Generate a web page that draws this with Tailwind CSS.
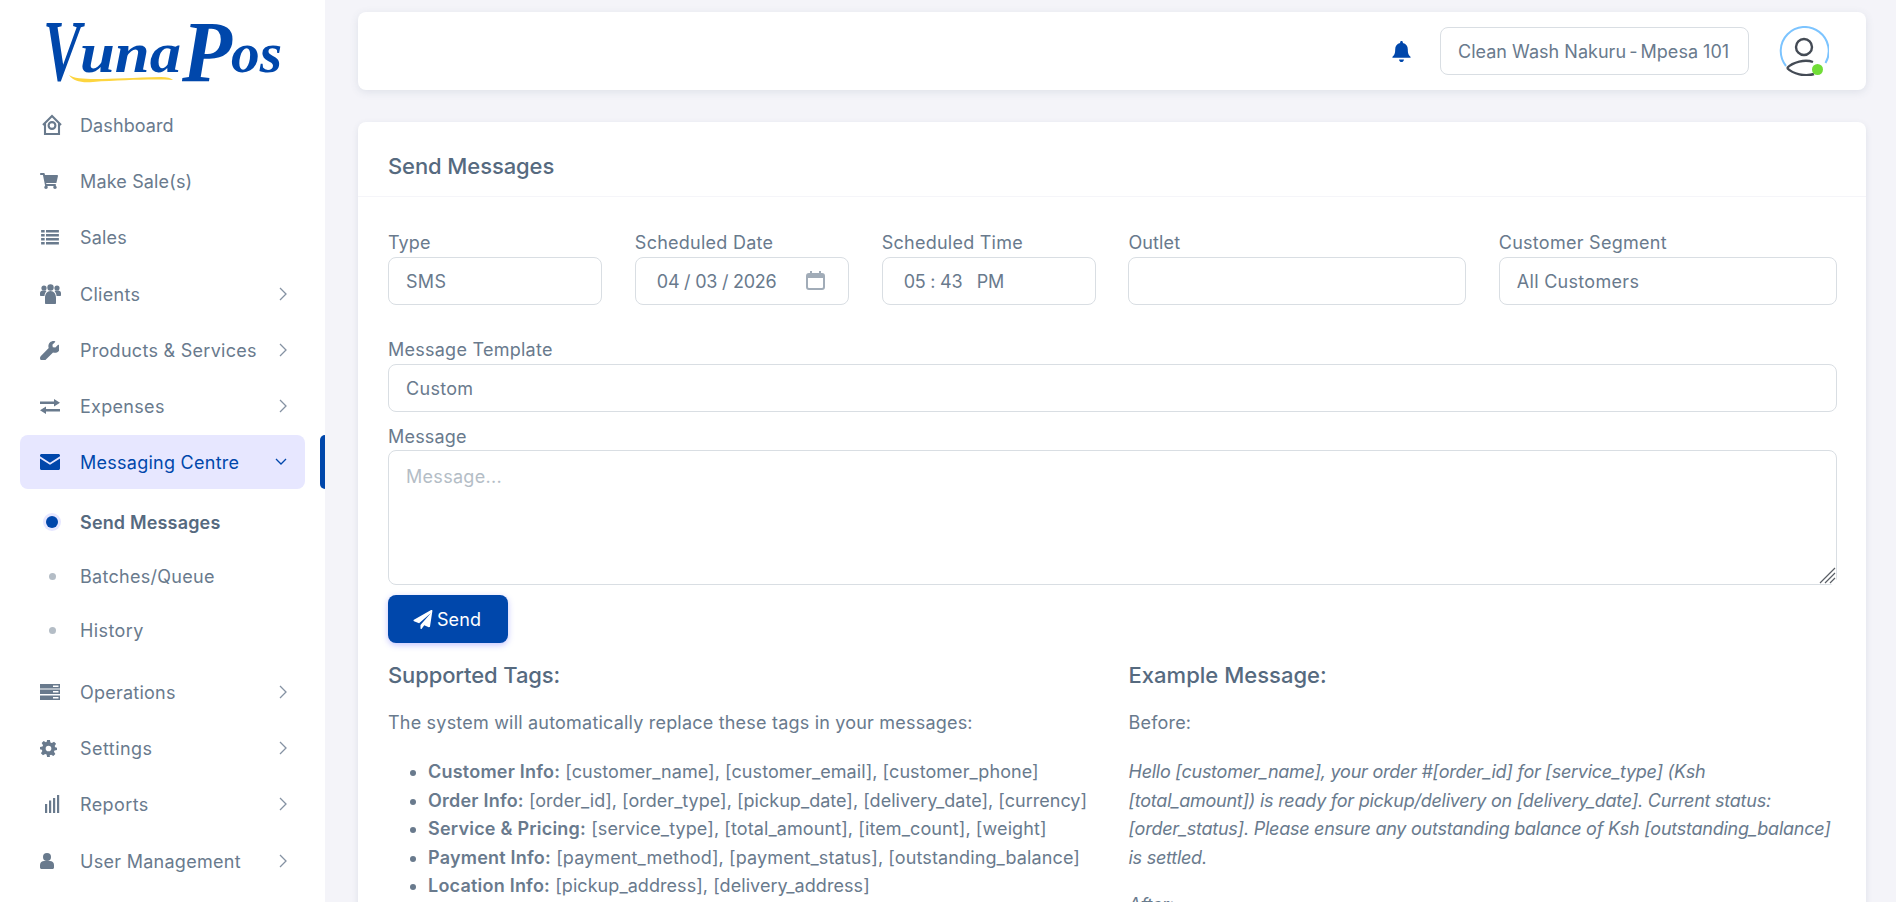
<!DOCTYPE html>
<html lang="en">
<head>
<meta charset="utf-8">
<title>Send Messages</title>
<script src="https://cdn.jsdelivr.net/npm/@tailwindcss/browser@4"></script>
</head>
<body class="m-0 h-screen overflow-hidden bg-[#f4f4f9] font-['Inter','Liberation_Sans',sans-serif] text-[18px] text-[#697a8d]">
<div class="flex h-[902px] overflow-hidden">
  <!-- Sidebar -->
  <aside class="w-[325px] shrink-0 bg-white h-full overflow-hidden relative">
    <div class="h-[97px] pl-[43px]">
      <svg class="block" width="260" height="97" viewBox="0 0 260 97" aria-label="VunaPos logo">
        <text font-family="Liberation Serif" font-style="italic" font-weight="700" fill="#0047ab"><tspan x="0" y="80" font-size="86" textLength="38" lengthAdjust="spacingAndGlyphs">V</tspan><tspan x="37" y="72" font-size="58" textLength="101" lengthAdjust="spacingAndGlyphs">una</tspan><tspan x="139" y="81" font-size="86" textLength="50" lengthAdjust="spacingAndGlyphs">P</tspan><tspan x="188" y="72" font-size="58" textLength="51" lengthAdjust="spacingAndGlyphs">os</tspan></text>
        <path d="M26 75 C36 82 70 78 118 77 C124 77 128 78 130 80 C110 79 80 80 50 82 C38 83 30 81 26 75Z" fill="#fdd53f"/>
      </svg>
    </div>
    <nav class="flex flex-col">
      <a class="h-[56px] flex items-center pl-[40px] pr-[38px] shrink-0">
        <svg class="w-[24px] h-[24px] mr-[16px] text-[#697a8d]" viewBox="0 0 24 24" fill="none" stroke="currentColor" stroke-width="2.1"><path d="M3 12 L12 3 L21 12 M5 10 V21 H19 V10"/><circle cx="12" cy="12.5" r="3.4"/></svg>
        <span class="tracking-[0.1px]">Dashboard</span>
      </a>
      <a class="h-[56px] flex items-center pl-[40px] pr-[38px] shrink-0">
        <svg class="w-[18px] h-[16px] mr-[22px]" viewBox="0 0 576 512" fill="currentColor"><path d="M528 301 L575 93c3-15-8-29-23-29H159L150 19C148 8 138 0 126 0H24C11 0 0 11 0 24v16c0 13 11 24 24 24h70l70 344c-17 10-28 28-28 48 0 31 25 56 56 56s56-25 56-56c0-16-6-30-17-40h210c-11 10-17 24-17 40 0 31 25 56 56 56s56-25 56-56c0-22-13-41-32-50l6-24c3-15-8-29-23-29H204l-7-32h308c11 0 21-8 23-19z"/></svg>
        <span class="tracking-[0.15px]">Make Sale(s)</span>
      </a>
      <a class="h-[56px] flex items-center pl-[40px] pr-[38px] shrink-0">
        <svg class="w-[20px] h-[16px] mr-[20px]" viewBox="0 0 20 18" fill="currentColor"><path d="M0 1h4v3H0zM5.500 1H20v3H5.500zM0 5.500h4v3H0zM5.500 5.500H20v3H5.500zM0 10h4v3H0zM5.500 10H20v3H5.500zM0 14.500h4v3H0zM5.500 14.500H20v3H5.500z"/></svg>
        <span class="tracking-[0.2px]">Sales</span>
      </a>
      <a class="h-[56px] mt-px flex items-center pl-[40px] pr-[38px] shrink-0">
        <svg class="w-[21px] h-[20px] mr-[19px]" viewBox="0 0 21 20" fill="currentColor"><circle cx="4" cy="4" r="2.600"/><circle cx="17" cy="4" r="2.600"/><circle cx="10.500" cy="3.500" r="3.200"/><path d="M0 9c0-2 2-2.500 4-2.500s2.500.5 2.500.5c-1 1-2 3-2 5H1c-.6 0-1-.4-1-1zM21 9c0-2-2-2.500-4-2.500s-2.500.5-2.500.5c1 1 2 3 2 5H20c.6 0 1-.4 1-1zM5 14c0-4 2-7 5.500-7S16 10 16 14v5c0 .6-.4 1-1 1H6c-.6 0-1-.4-1-1z"/></svg>
        <span class="tracking-[0.3px]">Clients</span>
        <svg class="ml-auto w-[8px] h-[14px]" viewBox="0 0 8 14" fill="none" stroke="#8592a3" stroke-width="1.300"><path d="M1 1l6 6-6 6"/></svg>
      </a>
      <a class="h-[56px] flex items-center pl-[40px] pr-[38px] shrink-0">
        <svg class="w-[19px] h-[19px] mr-[21px]" viewBox="0 0 512 512" fill="currentColor"><path d="M507 109c-2-9-13-12-20-5l-74 74-68-11-11-68 74-74c7-7 4-18-6-20-47-12-99 0-136 37-40 40-50 99-31 149L24 402c-32 32-32 84 0 116s84 32 116 0l211-211c50 20 109 10 150-31 37-37 49-90 36-167z"/></svg>
        <span class="tracking-[0.28px]">Products &amp; Services</span>
        <svg class="ml-auto w-[8px] h-[14px]" viewBox="0 0 8 14" fill="none" stroke="#8592a3" stroke-width="1.300"><path d="M1 1l6 6-6 6"/></svg>
      </a>
      <a class="h-[56px] flex items-center pl-[40px] pr-[38px] shrink-0">
        <svg class="w-[20px] h-[15px] mr-[20px]" viewBox="0 0 20 15" fill="currentColor"><path d="M0 2.600h14V0l6 3.800-6 3.700V5H0zM20 10H6V7.500L0 11.200 6 15v-2.500h14z"/></svg>
        <span class="tracking-[0.3px]">Expenses</span>
        <svg class="ml-auto w-[8px] h-[14px]" viewBox="0 0 8 14" fill="none" stroke="#8592a3" stroke-width="1.300"><path d="M1 1l6 6-6 6"/></svg>
      </a>
      <!-- Active -->
      <div class="relative h-[54px] mt-px mb-px shrink-0">
        <a class="absolute left-[20px] right-[20px] inset-y-0 rounded-[8px] bg-[#e7e7ff] text-[#0047ab] flex items-center pl-[20px] pr-[18px]">
          <svg class="w-[20px] h-[16px] mr-[20px]" viewBox="0 0 20 16" fill="currentColor"><path d="M1.500 0h17C19.300 0 20 .7 20 1.500v.8l-10 6.400L0 2.300v-.8C0 .7.700 0 1.500 0zM0 4.500l10 6.300 10-6.300v10c0 .8-.7 1.500-1.500 1.500h-17C.7 16 0 15.300 0 14.500z"/></svg>
          <span class="tracking-[0.26px]">Messaging Centre</span>
          <svg class="ml-auto w-[12px] h-[8px]" viewBox="0 0 12 8" fill="none" stroke="#0047ab" stroke-width="1.300"><path d="M1 1l5 5 5-5"/></svg>
        </a>
        <span class="absolute right-0 inset-y-0 w-[5px] rounded-l-[5px] bg-[#0047ab]"></span>
      </div>
      <div class="flex flex-col pt-[5px]">
        <a class="h-[54px] flex items-center pl-[80px] relative font-semibold text-[#566a7f] shrink-0">
          <span class="absolute left-[46px] w-[12px] h-[12px] rounded-full bg-[#0047ab] ring-[3px] ring-[#e7e7ff]"></span>
          <span class="tracking-[0.17px]">Send Messages</span>
        </a>
        <a class="h-[54px] flex items-center pl-[80px] relative shrink-0">
          <span class="absolute left-[49px] w-[7px] h-[7px] rounded-full bg-[#b4bdc6]"></span>
          <span class="tracking-[0.28px]">Batches/Queue</span>
        </a>
        <a class="h-[54px] flex items-center pl-[80px] relative shrink-0">
          <span class="absolute left-[49px] w-[7px] h-[7px] rounded-full bg-[#b4bdc6]"></span>
          <span class="tracking-[0.4px]">History</span>
        </a>
      </div>
      <a class="h-[56px] mt-[7px] flex items-center pl-[40px] pr-[38px] shrink-0">
        <svg class="w-[20px] h-[16px] mr-[20px]" viewBox="0 0 20 16" fill="currentColor"><path fill-rule="evenodd" d="M0 0h20v4.500H0zM13 1.500v1.500h5.500V1.500zM0 5.500h20V10H0zM13 7v1.500h5.500V7zM0 11.500h20V16H0zM13 13v1.500h5.500V13z"/></svg>
        <span class="tracking-[0.24px]">Operations</span>
        <svg class="ml-auto w-[8px] h-[14px]" viewBox="0 0 8 14" fill="none" stroke="#8592a3" stroke-width="1.300"><path d="M1 1l6 6-6 6"/></svg>
      </a>
      <a class="h-[56px] flex items-center pl-[40px] pr-[38px] shrink-0">
        <svg class="w-[17px] h-[17px] mr-[23px]" viewBox="0 0 24 24" fill="currentColor"><path fill-rule="evenodd" d="M10 0h4l.7 3.400 2 .9L19.800 2.300l2.900 2.900-2 3.100.8 2L24 11v3l-3.500.7-.8 2 2 3.100-2.900 2.900-3.100-2-2 .8L14 24h-4l-.7-3.500-2-.8-3.100 2-2.900-2.900 2-3.100-.8-2L0 13V10l3.500-.7.8-2-2-3.100L5.200 1.300l3.100 2 1-.4zM12 8a4 4 0 1 0 0 8 4 4 0 0 0 0-8z"/></svg>
        <span class="tracking-[0.45px]">Settings</span>
        <svg class="ml-auto w-[8px] h-[14px]" viewBox="0 0 8 14" fill="none" stroke="#8592a3" stroke-width="1.300"><path d="M1 1l6 6-6 6"/></svg>
      </a>
      <a class="h-[56px] flex items-center pl-[40px] pr-[38px] shrink-0">
        <svg class="w-[20px] h-[18px] mr-[20px]" viewBox="0 0 20 18" fill="currentColor"><path d="M5 9h2.200v9H5zM9 5.500h2.200V18H9zM13 3h2.200v15H13zM17 0h2.200v18H17z"/></svg>
        <span class="tracking-[0.4px]">Reports</span>
        <svg class="ml-auto w-[8px] h-[14px]" viewBox="0 0 8 14" fill="none" stroke="#8592a3" stroke-width="1.300"><path d="M1 1l6 6-6 6"/></svg>
      </a>
      <a class="h-[56px] mt-px flex items-center pl-[40px] pr-[38px] shrink-0">
        <svg class="w-[14px] h-[16px] mr-[26px]" viewBox="0 0 14 16" fill="currentColor"><circle cx="7" cy="4" r="4"/><path d="M0 12c0-2.500 2-4 4-4h6c2 0 4 1.500 4 4v2.500c0 .8-.7 1.500-1.500 1.500h-11C.7 16 0 15.300 0 14.500z"/></svg>
        <span class="tracking-[0.28px]">User Management</span>
        <svg class="ml-auto w-[8px] h-[14px]" viewBox="0 0 8 14" fill="none" stroke="#8592a3" stroke-width="1.300"><path d="M1 1l6 6-6 6"/></svg>
      </a>
    </nav>
  </aside>

  <!-- Main -->
  <main class="flex-1 min-w-0 pl-[33px] pr-[30px] pt-[12px]">
    <header class="h-[78px] bg-white rounded-[8px] shadow-[0_2px_8px_rgba(67,89,113,0.12)] flex items-center justify-end pr-[37px]">
      <svg class="w-[21px] h-[21px] mr-[28px]" viewBox="0 0 20 20" fill="#0047ab"><path d="M10 0c.8 0 1.300.6 1.300 1.300v.6c3 .6 4.700 3 4.700 6 0 4 .8 5.400 2.500 7.100.4.400.2 1-.4 1H1.900c-.6 0-.8-.6-.4-1C3.200 13.300 4 11.900 4 7.900c0-3 1.700-5.400 4.700-6v-.6C8.700.6 9.200 0 10 0zM7.700 17.500h4.600c0 1.300-1 2.500-2.300 2.500s-2.300-1.200-2.300-2.500z"/></svg>
      <div class="w-[309px] h-[48px] rounded-[8px] border border-[#d9dee3] flex items-center pl-[17px] whitespace-pre tracking-[0.02px]">Clean Wash Nakuru<span class="-mx-[2px]"> - </span>Mpesa 101</div>
      <div class="relative w-[50px] h-[50px] ml-[30px]">
        <svg class="w-[50px] h-[50px]" viewBox="0 0 50 50" fill="none">
          <path d="M7 40 A24 24 0 1 1 46.500 37" stroke="#7cc4ff" stroke-width="2"/>
          <circle cx="25" cy="21" r="8" stroke="#444b55" stroke-width="2.400"/>
          <path d="M8 42 C14 36 26 33 34 36 M8 42 C14 48 26 51 35 48" stroke="#444b55" stroke-width="2.400"/>
        </svg>
        <span class="absolute left-[33px] top-[38px] w-[11px] h-[11px] rounded-full bg-[#71dd37]"></span>
      </div>
    </header>

    <section class="mt-[32px] bg-white rounded-[8px] shadow-[0_2px_6px_rgba(67,89,113,0.12)] h-[800px]">
      <div class="h-[75px] flex items-center pl-[30px] pr-[29px] pt-[14px] border-b border-[#f5f5f9]">
        <h1 class="text-[22px] font-medium text-[#566a7f] tracking-[-0.1px]">Send Messages</h1>
      </div>
      <div class="pl-[30px] pr-[29px] pt-[33px]">
        <div class="grid grid-cols-12 gap-x-[32px]">
          <div class="col-span-2 pr-px">
            <div class="h-[27px] leading-[25px] tracking-[0.1px]">Type</div>
            <div class="h-[48px] rounded-[8px] border border-[#d9dee3] flex items-center pl-[17px] pt-[1px] tracking-[0.3px]">SMS</div>
          </div>
          <div class="col-span-2 pr-px">
            <div class="h-[27px] leading-[25px] tracking-[0.25px]">Scheduled Date</div>
            <div class="h-[48px] rounded-[8px] border border-[#d9dee3] flex items-center pl-[21px] pr-[23px] pt-[1px]">
              <span class="whitespace-pre tracking-[-0.25px]">04 / 03 / 2026</span>
              <svg class="ml-auto w-[19px] h-[19px] -mt-[3px]" viewBox="0 0 19 19" fill="none" stroke="#a1acb8" stroke-width="2"><rect x="1" y="3" width="17" height="15" rx="2"/><path d="M1 5.500h17" stroke-width="3"/><path d="M5 0v3M14 0v3"/></svg>
            </div>
          </div>
          <div class="col-span-2">
            <div class="h-[27px] leading-[25px] tracking-[0.25px]">Scheduled Time</div>
            <div class="h-[48px] rounded-[8px] border border-[#d9dee3] flex items-center pl-[21px] pt-[1px]">
              <span class="whitespace-pre tracking-[-0.25px]">05 : 43   PM</span>
            </div>
          </div>
          <div class="col-span-3 pr-px">
            <div class="h-[27px] leading-[25px] tracking-[0.1px]">Outlet</div>
            <div class="h-[48px] rounded-[8px] border border-[#d9dee3]"></div>
          </div>
          <div class="col-span-3">
            <div class="h-[27px] leading-[25px] tracking-[0.27px]">Customer Segment</div>
            <div class="h-[48px] rounded-[8px] border border-[#d9dee3] flex items-center pl-[17px] pt-[1px] tracking-[0.3px]">All Customers</div>
          </div>
        </div>
        <div class="mt-[32px] h-[27px] leading-[26px] tracking-[0.25px]">Message Template</div>
        <div class="h-[48px] rounded-[8px] border border-[#d9dee3] flex items-center pl-[17px] pt-[1px] tracking-[0.3px]">Custom</div>
        <div class="mt-[11px] h-[27px] leading-[27px] tracking-[0.2px]">Message</div>
        <div class="relative">
          <textarea placeholder="Message..." class="block w-full h-[135px] rounded-[8px] border border-[#d9dee3] pl-[17px] pr-[18px] py-[12px] tracking-[0.3px] resize-y placeholder:text-[#b4bdc6] outline-none"></textarea>
          <svg class="absolute right-[1px] bottom-[1px] w-[17px] h-[17px] pointer-events-none" viewBox="0 0 17 17" fill="none" stroke-width="1.200"><rect width="17" height="17" fill="#fff"/><path d="M1 16 L16 1 M6 16 L16 6 M11 16 L16 11" stroke="#5a5f66"/></svg>
        </div>
        <div class="mt-[10px] w-[120px] h-[48px] rounded-[8px] bg-[#0047ab] text-white flex items-center justify-center gap-[4px] shadow-[0_2px_6px_rgba(105,108,255,0.4)]">
          <svg class="w-[20px] h-[19px] -ml-[2px]" viewBox="0 0 512 512" fill="#fff"><path d="M498 2c8 5 13 15 11 25L445 443c-1 8-6 14-13 18s-15 4-22 1l-120-50-69 91c-5 6-12 9-20 7-7-2-13-9-13-17v-90L470 80 150 360 14 304C6 300 0 292 0 283c-1-9 4-18 12-23L474 2c7-4 16-4 24 0z"/></svg>
          <span class="tracking-[0.1px]">Send</span>
        </div>
        <div class="grid grid-cols-2 gap-x-[32px] mt-[17px]">
          <div>
            <h2 class="text-[22px] font-medium leading-[30px] text-[#566a7f] tracking-[-0.12px]">Supported Tags:</h2>
            <p class="mt-[18px] leading-[30px] whitespace-nowrap tracking-[0.2px]">The system will automatically replace these tags in your messages:</p>
            <ul class="mt-[20px] pl-[40px] list-disc leading-[28.6px] whitespace-nowrap tracking-[0.06px]">
              <li><b class="font-semibold tracking-[0.22px]">Customer Info:</b> [customer_name], [customer_email], [customer_phone]</li>
              <li class="tracking-[0.02px]"><b class="font-semibold tracking-[0.22px]">Order Info:</b> [order_id], [order_type], [pickup_date], [delivery_date], [currency]</li>
              <li class="tracking-[0.1px]"><b class="font-semibold tracking-[0.22px]">Service &amp; Pricing:</b> [service_type], [total_amount], [item_count], [weight]</li>
              <li class="tracking-[0.12px]"><b class="font-semibold tracking-[0.22px]">Payment Info:</b> [payment_method], [payment_status], [outstanding_balance]</li>
              <li><b class="font-semibold tracking-[0.22px]">Location Info:</b> [pickup_address], [delivery_address]</li>
            </ul>
          </div>
          <div>
            <h2 class="text-[22px] font-medium leading-[30px] text-[#566a7f] tracking-[0.02px]">Example Message:</h2>
            <p class="mt-[18px] leading-[30px] tracking-[0.2px]">Before:</p>
            <p class="mt-[20px] italic leading-[28.6px] whitespace-nowrap tracking-[-0.25px]">Hello [customer_name], your order #[order_id] for [service_type] (Ksh<br>[total_amount]) is ready for pickup/delivery on [delivery_date]. Current status:<br>[order_status]. Please ensure any outstanding balance of Ksh [outstanding_balance]<br>is settled.</p>
            <p class="mt-[19px] italic leading-[28.6px] tracking-[-0.25px]">After:</p>
          </div>
        </div>
      </div>
    </section>
  </main>
</div>
</body>
</html>
